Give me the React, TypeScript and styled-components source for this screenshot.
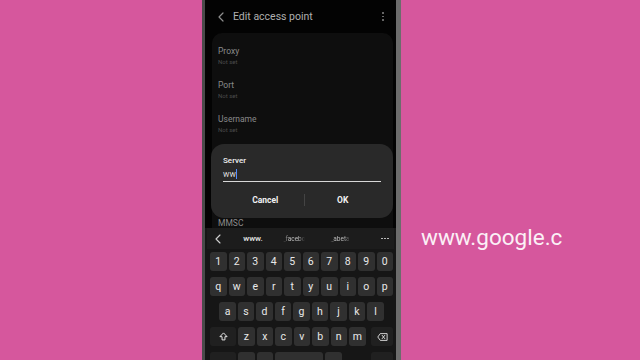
import React from "react";
import styled, { createGlobalStyle } from "styled-components";

const Global = createGlobalStyle`
  html, body { margin: 0; padding: 0; }
  body {
    background: #d6579d;
    font-family: Roboto, "Noto Sans", Arial, sans-serif;
    overflow: hidden;
  }
`;

const Stage = styled.div`
  width: 640px;
  height: 360px;
  display: flex;
  gap: 20px;
  padding-left: 202px;
  box-sizing: border-box;
`;

const Phone = styled.div`
  width: 199px;
  height: 360px;
  flex-shrink: 0;
  box-sizing: border-box;
  background: #000;
  border-left: 3px solid #4a4a4a;
  border-right: 5px solid #6c6c6c;
  box-shadow: inset 1px 0 0 #2a2a2a, inset -2px 0 0 #1a1a1a;
  display: flex;
`;

const Screen = styled.div`
  position: relative;
  flex: 1;
  display: flex;
  flex-direction: column;
  background: #030303;
  overflow: hidden;
`;

const TopBar = styled.div`
  height: 33px;
  flex-shrink: 0;
  display: flex;
  align-items: center;
  padding: 0 12px 0 13px;
  box-sizing: border-box;
  color: #a9a9a9;
`;

const Title = styled.div`
  font-size: 10.5px;
  margin-left: 9px;
  flex: 1;
  color: #b0b0b0;
`;

const Kebab = styled.div`
  display: flex;
  flex-direction: column;
  gap: 2px;
  & > span {
    width: 1.6px;
    height: 1.6px;
    border-radius: 50%;
    background: #7a7a7a;
    display: block;
  }
`;

const Card = styled.div`
  flex: 1;
  min-height: 0;
  margin: 0 3px 0 7px;
  background: #0e0e0e;
  border-radius: 10px 10px 0 0;
  padding: 13px 6px 0;
  overflow: hidden;
`;

const Item = styled.div`
  height: 34px;
  box-sizing: border-box;
`;

const ItemLabel = styled.div`
  font-size: 8.5px;
  line-height: 11px;
  color: #8a8a8a;
`;

const ItemSub = styled.div`
  font-size: 6px;
  line-height: 8px;
  margin-top: 1px;
  color: #4c4c4c;
`;

const Dialog = styled.div`
  position: absolute;
  left: 6px;
  top: 144px;
  width: 182px;
  height: 74px;
  background: #292929;
  border-radius: 13px;
  padding: 12px 12px 0;
  box-sizing: border-box;
`;

const FieldLabel = styled.div`
  font-size: 8px;
  line-height: 10px;
  font-weight: 500;
  color: #f0f0f0;
`;

const Field = styled.div`
  margin-top: 1px;
  height: 14px;
  border-bottom: 1.5px solid #d8d8d8;
  display: flex;
  align-items: center;
  font-size: 8.5px;
  color: #dcdcdc;
`;

const Cursor = styled.span`
  width: 1px;
  height: 10px;
  background: #4f8cff;
  margin-left: 0.5px;
`;

const Buttons = styled.div`
  margin-top: 10px;
  height: 16px;
  display: flex;
  align-items: center;
  padding-left: 4px;
`;

const DButton = styled.div`
  flex: 1;
  text-align: center;
  font-size: 8.5px;
  font-weight: 700;
  color: #f2f2f2;
`;

const VDivider = styled.div`
  width: 1px;
  height: 12px;
  background: #444;
`;

const Keyboard = styled.div`
  height: 132px;
  flex-shrink: 0;
  background: #161616;
  display: flex;
  flex-direction: column;
  overflow: hidden;
`;

const Toolbar = styled.div`
  height: 21px;
  flex-shrink: 0;
  display: flex;
  align-items: center;
  background: #1c1c1c;
  margin: 0 2px;
`;

const TSlot = styled.div<{ $w: number }>`
  width: ${(p) => p.$w}px;
  flex-shrink: 0;
  display: flex;
  justify-content: center;
  align-items: center;
`;

const Suggest = styled.span`
  font-size: 8px;
  font-weight: 500;
  color: #e6e6e6;
`;

const Faded = styled.span`
  font-size: 6.5px;
  color: #bdbdbd;
  -webkit-mask-image: linear-gradient(to right, transparent 0%, #000 25%, #000 70%, transparent 100%);
  mask-image: linear-gradient(to right, transparent 0%, #000 25%, #000 70%, transparent 100%);
`;

const Dots = styled.div`
  flex: 1;
  display: flex;
  justify-content: center;
  gap: 1.5px;
  padding-left: 6px;
  & > span {
    width: 1.8px;
    height: 1.8px;
    border-radius: 50%;
    background: #cfcfcf;
    display: block;
  }
`;

const Keys = styled.div`
  flex-shrink: 0;
  padding: 3px 3px 0 5px;
  display: flex;
  flex-direction: column;
  gap: 6px;
`;

const Row = styled.div<{ $center?: boolean }>`
  display: flex;
  gap: 2px;
  height: 19px;
  flex-shrink: 0;
  justify-content: ${(p) => (p.$center ? "center" : "flex-start")};
`;

const Key = styled.div<{ $dark?: boolean; $w?: number; $push?: boolean }>`
  width: ${(p) => p.$w ?? 16.5}px;
  flex-shrink: 0;
  height: 19px;
  border-radius: 3px;
  background: ${(p) => (p.$dark ? "#202020" : "#303030")};
  display: flex;
  align-items: center;
  justify-content: center;
  font-size: 10.5px;
  color: #e9e9e9;
  margin-left: ${(p) => (p.$push ? "auto" : "0")};
`;

const BigText = styled.div`
  margin-top: 223px;
  font-size: 22.5px;
  line-height: 28px;
  height: 28px;
  color: #fbf0f6;
  white-space: nowrap;
`;

const Chevron = ({ size = 10, color = "#9a9a9a", w = 1.2 }: { size?: number; color?: string; w?: number }) => (
  <svg width={size * 0.6} height={size} viewBox="0 0 6 10">
    <path d="M5 1 L1 5 L5 9" fill="none" stroke={color} strokeWidth={w} strokeLinecap="round" strokeLinejoin="round" />
  </svg>
);

const ShiftIcon = () => (
  <svg width="9" height="9" viewBox="0 0 10 10">
    <path d="M5 1 L9 5.2 H6.6 V8.8 H3.4 V5.2 H1 Z" fill="none" stroke="#e6e6e6" strokeWidth="1.1" strokeLinejoin="round" />
  </svg>
);

const BackspaceIcon = () => (
  <svg width="11" height="8" viewBox="0 0 12 9">
    <path d="M3.5 0.7 H11.2 V8.3 H3.5 L0.7 4.5 Z" fill="none" stroke="#e6e6e6" strokeWidth="1" strokeLinejoin="round" />
    <path d="M5.6 2.6 L8.6 6.4 M8.6 2.6 L5.6 6.4" stroke="#e6e6e6" strokeWidth="1" strokeLinecap="round" />
  </svg>
);

const items = [
  { label: "Proxy", sub: "Not set" },
  { label: "Port", sub: "Not set" },
  { label: "Username", sub: "Not set" },
  { label: "", sub: "" },
  { label: "", sub: "" },
  { label: "MMSC", sub: "Not set" },
];

export default function App() {
  const nums = "1234567890".split("");
  const r1 = "qwertyuiop".split("");
  const r2 = "asdfghjkl".split("");
  const r3 = "zxcvbnm".split("");
  return (
    <>
      <Global />
      <Stage>
        <Phone>
          <Screen>
            <TopBar>
              <Chevron size={10} color="#8f8f8f" />
              <Title>Edit access point</Title>
              <Kebab>
                <span />
                <span />
                <span />
              </Kebab>
            </TopBar>
            <Card>
              {items.map((it, i) => (
                <Item key={i}>
                  <ItemLabel>{it.label}</ItemLabel>
                  <ItemSub>{it.sub}</ItemSub>
                </Item>
              ))}
            </Card>
            <Keyboard>
              <Toolbar>
                <TSlot $w={21}>
                  <Chevron size={10} color="#d0d0d0" w={1.1} />
                </TSlot>
                <TSlot $w={50}>
                  <Suggest>www.</Suggest>
                </TSlot>
                <TSlot $w={32}>
                  <Faded>_facebo</Faded>
                </TSlot>
                <TSlot $w={60}>
                  <Faded>_abeta</Faded>
                </TSlot>
                <Dots>
                  <span />
                  <span />
                  <span />
                </Dots>
              </Toolbar>
              <Keys>
                <Row>
                  {nums.map((k) => (
                    <Key key={k}>{k}</Key>
                  ))}
                </Row>
                <Row>
                  {r1.map((k) => (
                    <Key key={k}>{k}</Key>
                  ))}
                </Row>
                <Row $center>
                  {r2.map((k) => (
                    <Key key={k}>{k}</Key>
                  ))}
                </Row>
                <Row>
                  <Key $dark $w={26}>
                    <ShiftIcon />
                  </Key>
                  {r3.map((k) => (
                    <Key key={k}>{k}</Key>
                  ))}
                  <Key $dark $w={22} $push>
                    <BackspaceIcon />
                  </Key>
                </Row>
                <Row>
                  <Key $dark $w={26} />
                  <Key />
                  <Key />
                  <Key $w={48} />
                  <Key />
                  <Key $dark $w={22} $push />
                </Row>
              </Keys>
            </Keyboard>
            <Dialog>
              <FieldLabel>Server</FieldLabel>
              <Field>
                ww
                <Cursor />
              </Field>
              <Buttons>
                <DButton>Cancel</DButton>
                <VDivider />
                <DButton>OK</DButton>
              </Buttons>
            </Dialog>
          </Screen>
        </Phone>
        <BigText>www.google.c</BigText>
      </Stage>
    </>
  );
}
